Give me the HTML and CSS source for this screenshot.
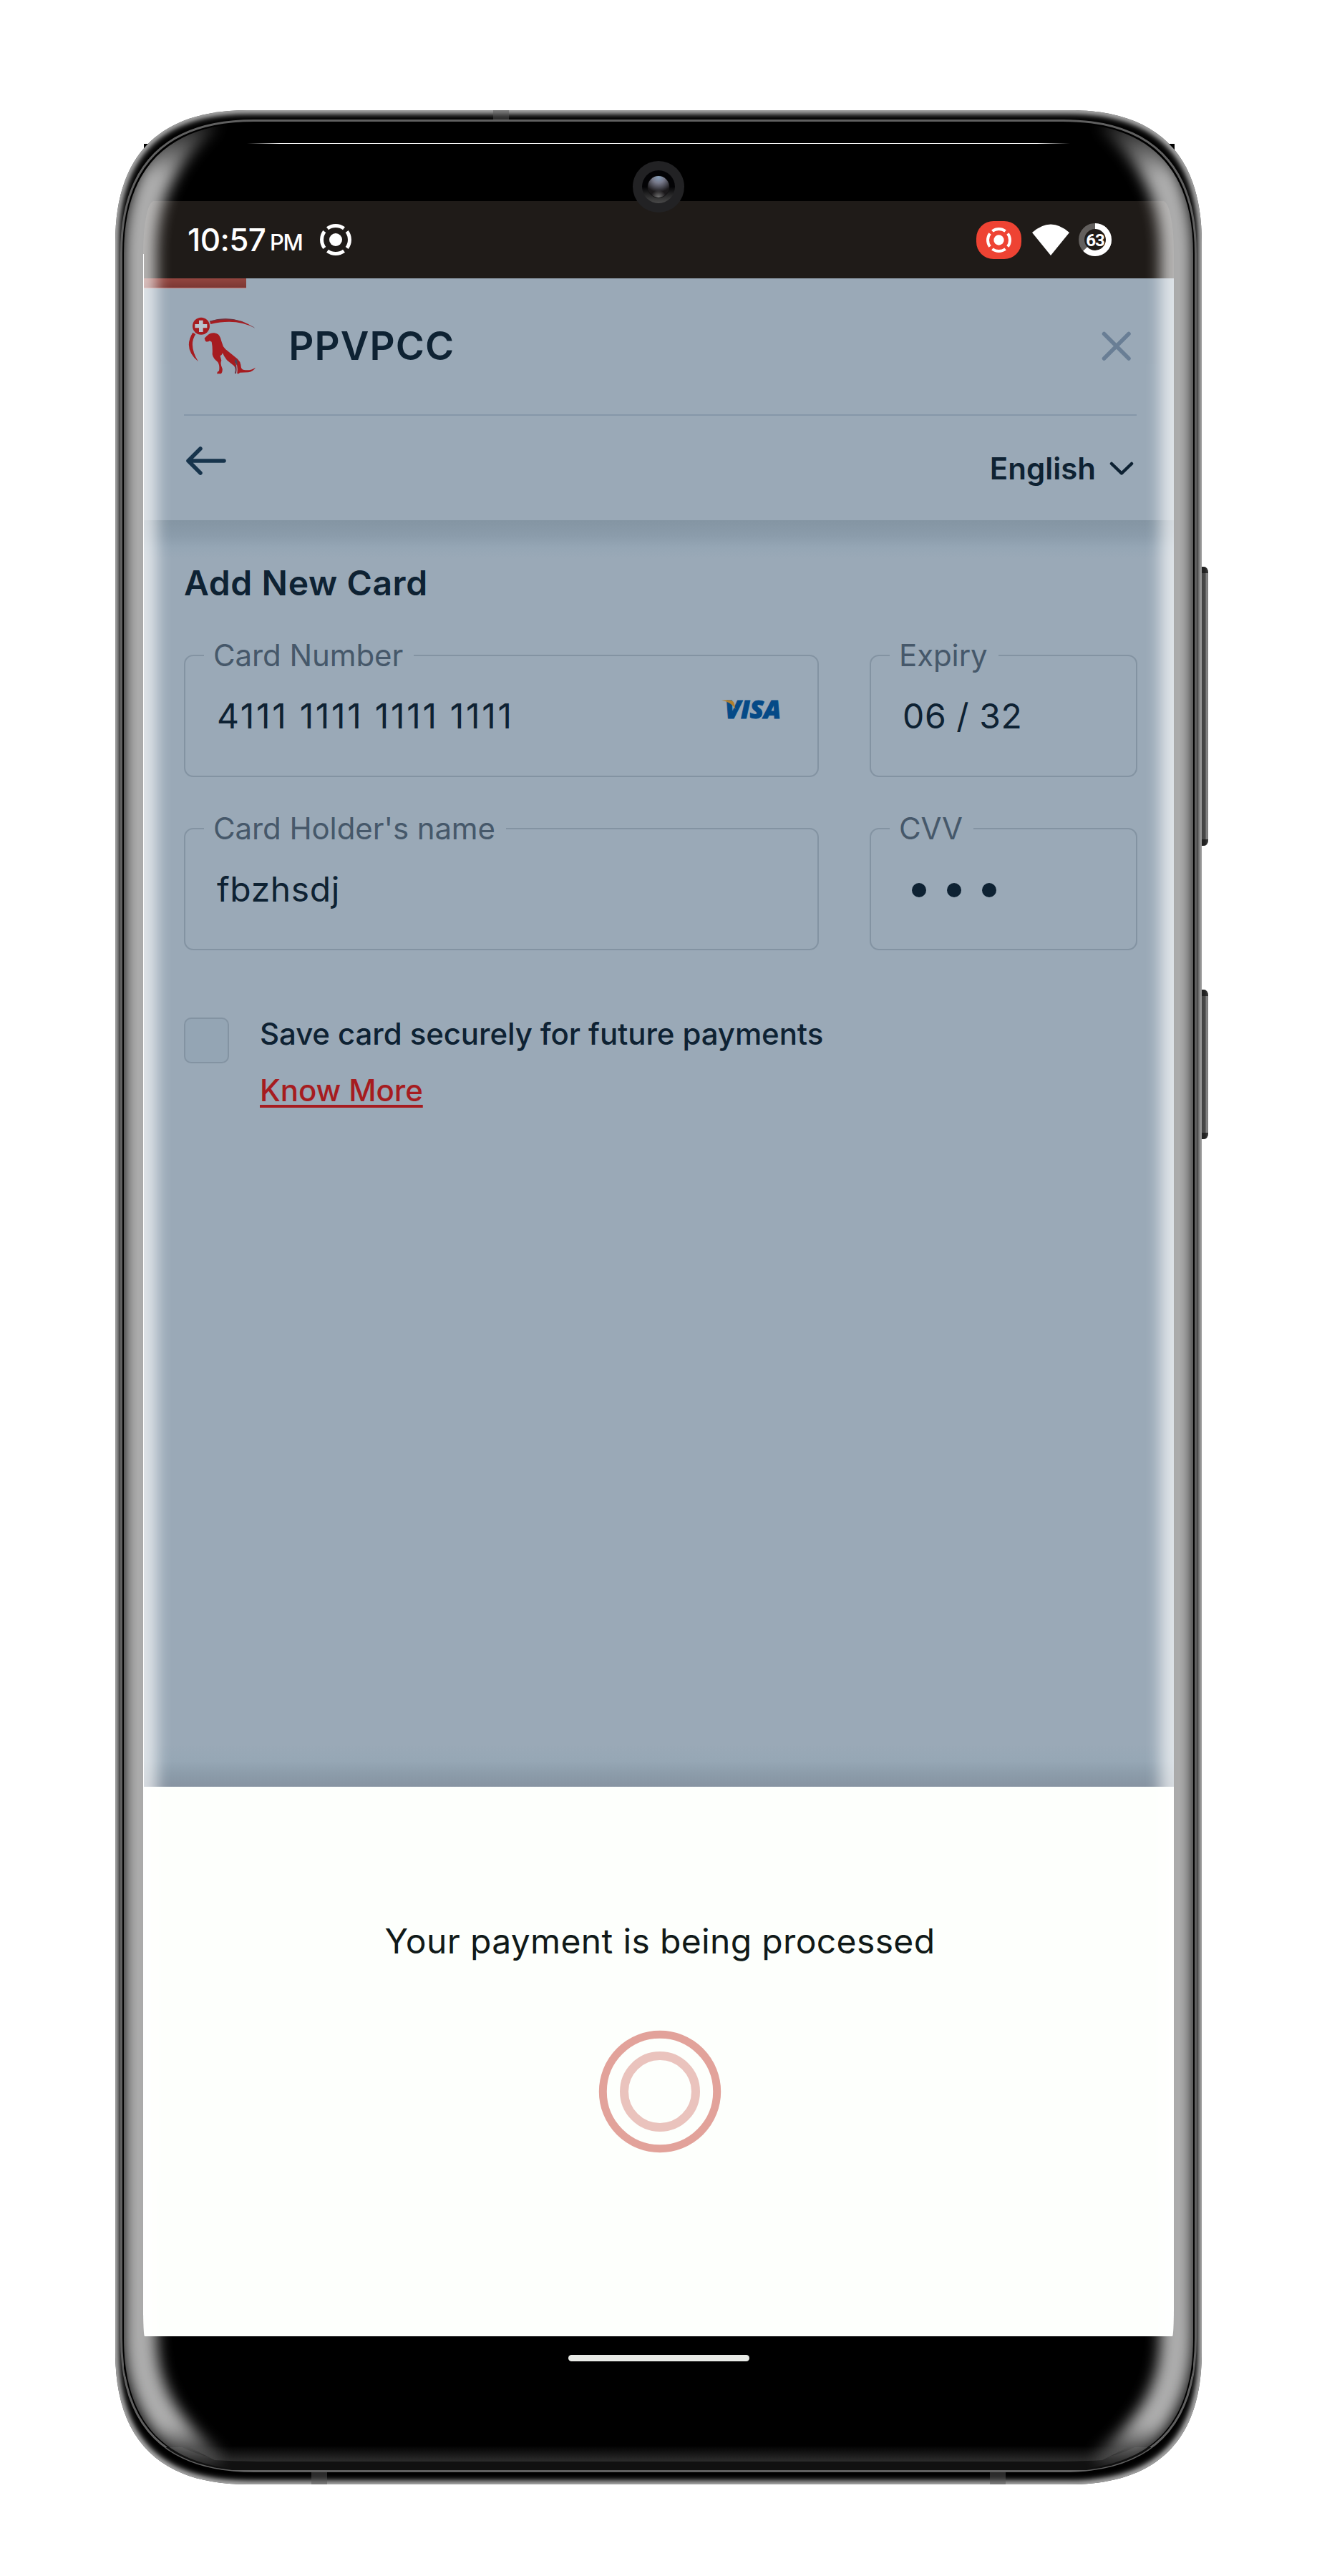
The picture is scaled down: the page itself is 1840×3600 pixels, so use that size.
FILE: index.html
```html
<!DOCTYPE html>
<html lang="en">
<head>
<meta charset="utf-8">
<title>PPVPCC – Add New Card</title>
<link rel="stylesheet" href="styles.css">
</head>
<body>
<div class="stage">
  <svg class="layer" viewBox="0 0 1840 3600" aria-hidden="true">
    <defs>
      <path id="body" d="M161 339C161 216 223 154 346 154H1494C1617 154 1679 216 1679 339V3287C1679 3410 1617 3472 1494 3472H346C223 3472 161 3410 161 3287Z"/>
      <path id="rim" d="M169.5 354C169.5 231 232 168.500 355 168.500H1485C1608 168.500 1670.500 231 1670.500 354V3268C1670.500 3391 1608 3453.500 1485 3453.500H355C232 3453.500 169.500 3391 169.500 3268Z"/>
      <clipPath id="bodyClip"><use href="#body"/></clipPath>
      <filter id="soft" filterUnits="userSpaceOnUse" x="100" y="100" width="1640" height="3440"><feGaussianBlur stdDeviation="4.500"/></filter>
      <linearGradient id="key" x1="0" x2="1"><stop offset="0" stop-color="#404040"/><stop offset=".6" stop-color="#484848"/><stop offset=".85" stop-color="#999"/><stop offset="1" stop-color="#555"/></linearGradient>
      <linearGradient id="bottomGlow" x1="0" x2="0" y1="0" y2="1"><stop offset="0" stop-color="#000"/><stop offset="1" stop-color="#2d2d2d"/></linearGradient>
      <clipPath id="rimClip"><use href="#rim"/></clipPath>
    </defs>
    <rect x="201" y="201" width="1440" height="60"/>
    <path d="M1677 792h4q7 0 7 9v372q0 9-7 9h-4zM1677 1383h4q7 0 7 9v191q0 9-7 9h-4z" fill="url(#key)"/>
    <path d="M1677 792h4q7 0 7 9h-11zM1677 1383h4q7 0 7 9h-11zM1677 1182h4q7 0 7-9h-11zM1677 1592h4q7 0 7-9h-11z" fill="#151515" opacity=".75"/>
    <use href="#body"/>
    <g clip-path="url(#bodyClip)">
      <use href="#body" fill="none" stroke="#f0f0f0" stroke-width="8" filter="url(#soft)"/>
      <path d="M689 154h22v13h-22zM435 3455h22v17h-22zM1383 3455h22v17h-22z" fill="#555" opacity=".5"/>
    </g>
    <use href="#rim" fill="#000" stroke="#606060" stroke-width="3"/>
    <g clip-path="url(#rimClip)">
      <path d="M173 3420H1667V3452H173Z" fill="#111"/>
      <path d="M173 3250V3310C190 3390 250 3440 350 3440H1490C1590 3440 1650 3390 1667 3310V3250Z" fill="#000"/>
      <path d="M260 3418H1580L1540 3438Q1510 3440 1480 3440H360Q330 3440 300 3438Z" fill="url(#bottomGlow)"/>
    </g>
  </svg>

  <div class="screen">
    <div class="statusbar">
      <span class="time">10:57</span><span class="ampm">PM</span>
      <svg class="cast" viewBox="-22 -22 44 44" width="44" height="44" fill="none" stroke="#fff" stroke-width="5"><circle r="9" fill="#fff" stroke="none"/><path d="M-11.500-15.700A19.500 19.500 0 0 1 11.500-15.700M15.700-11.500A19.500 19.500 0 0 1 15.700 11.500M11.500 15.700A19.500 19.500 0 0 1-11.500 15.700M-15.700 11.500A19.500 19.500 0 0 1-15.700-11.500"/></svg>
      <span class="rec"><svg viewBox="-22 -22 44 44" width="35" height="35" fill="none" stroke="#fff" stroke-width="5"><circle r="9" fill="#fff" stroke="none"/><path d="M-11.500-15.700A19.500 19.500 0 0 1 11.500-15.700M15.700-11.500A19.500 19.500 0 0 1 15.700 11.500M11.500 15.700A19.500 19.500 0 0 1-11.500 15.700M-15.700 11.500A19.500 19.500 0 0 1-15.700-11.500"/></svg></span>
      <svg class="wifi" viewBox="0 0 52 44" width="52" height="44"><path d="M0 12Q26-11 52 12L26 44Z" fill="#fff"/></svg>
      <svg class="battery" viewBox="-23 -23 46 46" width="46" height="46" fill="none" stroke-width="8"><circle r="19" stroke="#625f5d"/><circle r="19" stroke="#fff" pathLength="100" stroke-dasharray="63 100" transform="rotate(-90)"/><text y="9" text-anchor="middle" fill="#fff">63</text></svg>
    </div>

    <div class="app">
      <header class="header">
        <div class="progress"></div>
        <div class="brand">
          <svg class="logo" viewBox="92 126 292 246" width="97.300" height="82" fill="#a61c20">
            <circle cx="152" cy="167" r="36"/>
            <path d="M143 143h17v16h17v16h-17v17h-17v-17h-17v-16h17z" fill="#b9c2cc"/>
            <path d="M188 146Q290 116 378 176Q300 133 192 159Z"/>
            <path d="M188 146Q290 116 378 176L372 170Q290 122 188 149Z" fill="#45475a" opacity=".6"/>
            <path d="M117 194L129 201Q98 247 140 316Q75 262 117 194Z"/>
            <path d="M166 218Q172 212 180 205Q190 195 207 196Q227 198 233 217Q238 235 245 253Q252 265 270 277L305 305Q318 317 319 336Q320 349 332 351Q360 355 380 341Q371 357 350 361L314 362Q309 370 303 365Q308 330 295 318Q304 335 299 366H293Q299 346 290 334L260 310Q248 295 242 280Q239 290 232 292L237 311Q231 325 241 346Q243 357 236 367H219Q217 360 227 355Q231 332 222 318Q202 303 199 285Q201 258 196 233L188 229Q178 236 170 230Z"/>
            <path d="M296 304Q306 312 303 332L308 350Q302 326 292 317ZM293 336Q299 350 294 365L298 366Q302 345 296 334Z" fill="#4a4559"/>
          </svg>
          <span class="title">PPVPCC</span>
          <svg class="close" viewBox="0 0 42 42" width="42" height="42"><path d="M3.500 3.500L38 38M38 3.500L3.500 38" stroke="#697e95" stroke-width="5.500" stroke-linecap="round"/></svg>
        </div>
        <div class="navrow">
          <svg class="back" viewBox="0 0 58 42" width="58" height="42" fill="none" stroke="#17344c" stroke-width="5.500" stroke-linecap="round" stroke-linejoin="round"><path d="M21 4L4 21L21 38M4 21H54"/></svg>
          <span class="lang">English</span>
          <svg class="chevron" viewBox="0 0 34 22" width="34" height="22" fill="none" stroke="#0e2233" stroke-width="4.500" stroke-linecap="round" stroke-linejoin="round"><path d="M3 4L17 17.500L31 4"/></svg>
        </div>
      </header>
      <main class="main">
        <h1 class="heading">Add New Card</h1>
        <div class="fields">
          <fieldset class="field"><legend class="label">Card Number</legend>
            <span class="value number">4111 1111 1111 1111</span>
            <svg class="visa" viewBox="0 0 86 48" width="86" height="48"><text x="4" y="36" textLength="78" lengthAdjust="spacingAndGlyphs">VISA</text><path d="M-1 10.500H11Q16 11 17 16L18.500 23Q12 13-1 10.500Z" fill="#b07f2d"/></svg>
          </fieldset>
          <fieldset class="field"><legend class="label">Expiry</legend><span class="value expiry">06 / 32</span></fieldset>
          <fieldset class="field"><legend class="label">Card Holder's name</legend><span class="value holder">fbzhsdj</span></fieldset>
          <fieldset class="field"><legend class="label">CVV</legend><span class="dots"><i></i><i></i><i></i></span></fieldset>
        </div>
        <div class="save">
          <span class="checkbox"></span>
          <div class="savetext"><div class="savelabel">Save card securely for future payments</div><a class="more">Know More</a></div>
        </div>
      </main>
    </div>

    <section class="sheet">
      <p class="message">Your payment is being processed</p>
      <svg class="spinner" viewBox="0 0 172 172" width="172" height="172" fill="none"><circle cx="86" cy="86" r="79.700" stroke="#e2a29a" stroke-width="11"/><circle cx="86" cy="86" r="50" stroke="#eac3bd" stroke-width="12"/></svg>
    </section>
  </div>
  <div class="pill"></div>

  <svg class="layer" viewBox="0 0 1840 3600" aria-hidden="true">
    <defs>
      <clipPath id="glass"><path d="M173 354C173 235 235 172 355 172H1485C1605 172 1667 235 1667 354V3268C1667 3389 1606 3451 1485 3451H355C234 3451 173 3389 173 3268Z"/></clipPath>
      <filter id="glow" filterUnits="userSpaceOnUse" x="80" y="80" width="1680" height="3460"><feGaussianBlur stdDeviation="10"/></filter>
      <linearGradient id="fade" gradientUnits="userSpaceOnUse" x1="0" x2="0" y1="160" y2="3450"><stop offset="0" stop-color="#fff" stop-opacity="0"/><stop offset=".026" stop-color="#fff"/><stop offset=".982" stop-color="#fff"/><stop offset="1" stop-color="#fff" stop-opacity="0"/></linearGradient>
      <linearGradient id="hair"><stop offset="0" stop-color="#fff" stop-opacity="0"/><stop offset=".04" stop-color="#fff"/><stop offset=".96" stop-color="#fff"/><stop offset="1" stop-color="#fff" stop-opacity="0"/></linearGradient>
      <linearGradient id="bezel" x1="0" x2="0" y1="0" y2="1"><stop offset=".5" stop-color="#030305"/><stop offset="1" stop-color="#4a4a4a"/></linearGradient>
      <radialGradient id="lensTop" cx=".5" cy=".05" r=".7"><stop offset="0" stop-color="#869eb8"/><stop offset=".4" stop-color="#77798a"/><stop offset="1" stop-color="#1b191b"/></radialGradient>
      <radialGradient id="lensLow" cx=".5" cy="1" r=".35"><stop offset="0" stop-color="#777"/><stop offset="1" stop-color="#777" stop-opacity="0"/></radialGradient>
    </defs>
    <g clip-path="url(#glass)">
      <g filter="url(#glow)" fill="none" stroke="url(#fade)" stroke-width="46" opacity=".68">
        <path d="M290 160C228 210 196 270 196 354V3268C196 3340 230 3400 300 3450"/>
        <path d="M1550 160C1612 210 1644 270 1644 354V3268C1644 3340 1610 3400 1540 3450"/>
      </g>
    </g>
    <rect x="345" y="200" width="1150" height="1" fill="url(#hair)"/>
    <rect x="200" y="355" width="1" height="2880" fill="#fff"/>
    <circle cx="920" cy="261" r="36" fill="#222224"/>
    <circle cx="920" cy="261" r="23" fill="url(#bezel)"/>
    <circle cx="920" cy="261" r="15.500" fill="#111"/>
    <circle cx="920" cy="261" r="15" fill="url(#lensTop)"/>
    <circle cx="920" cy="261" r="15" fill="url(#lensLow)"/>
  </svg>
</div>
</body>
</html>
```
FILE: styles.css
```css
* { box-sizing: border-box; }
body { margin: 0; background: #fff; font-family: Inter, "Liberation Sans", sans-serif; color: #0e2233; }
.stage { position: relative; width: 1840px; height: 3600px; padding-top: 281px; overflow: hidden; }
.layer { position: absolute; inset: 0; width: 1840px; height: 3600px; }

.screen { position: relative; width: 1440px; margin: 0 auto; overflow: hidden; border-radius: 15px 15px 2px 2px / 70px 70px 40px 40px; }

.statusbar { display: flex; align-items: center; height: 108px; padding: 0 87px 0 62px; background: #1f1b18; color: #fff; }
.time { width: 115px; font-size: 44px; font-weight: 500; letter-spacing: -0.6px; white-space: nowrap; }
.ampm { width: 70px; margin-top: 6px; font-size: 31px; font-weight: 500; letter-spacing: -1.5px; }
.rec { display: flex; align-items: center; justify-content: center; width: 63px; height: 53px; margin-left: auto; border-radius: 24px; background: #ee4333; }
.wifi { margin-left: 15px; }
.battery { margin-left: 13px; }
.battery text { font: 700 24px Roboto, sans-serif; letter-spacing: -1px; }

.app { height: 2108px; background: linear-gradient(to top, #8793a1 0, #8b9ba9 16px, #96a7b5 36px, #9aa9b7 60px); }
.header { position: relative; height: 338px; padding: 0 52px 0 57px; background: #9aa9b7; }
.header::after { content: ""; position: absolute; left: 0; right: 0; top: 100%; height: 54px; background: linear-gradient(#8495a3, #8b9cab 22px, #95a6b5 38px, #9aa9b7); }
.progress { position: absolute; left: 0; top: 0; width: 144px; height: 14px; background: linear-gradient(#93453f, #7b3733); border-bottom: 1px solid #c27a76; }
.brand { display: flex; align-items: center; height: 192px; padding: 0 7px 0 4px; border-bottom: 2px solid #8597a9; }
.logo { margin-top: -2px; }
.title { margin: -2px 0 0 45px; font-size: 54.5px; font-weight: 600; line-height: 60px; letter-spacing: 1.1px; }
.close { margin-left: auto; }
.navrow { display: flex; align-items: center; height: 146px; }
.back { margin: -21px 0 0 2px; }
.lang { margin-left: auto; font-size: 42px; font-weight: 600; }
.chevron { margin: 2px 4px 0 19px; }

.main { padding: 58px 52px 0 57px; }
.heading { margin: 0; font-size: 48px; font-weight: 600; line-height: 60px; letter-spacing: 0.6px; }
.fields { display: grid; grid-template-columns: 887px 374px; column-gap: 71px; row-gap: 46px; margin-top: 45px; }
.field { display: flex; min-width: 0; height: 196px; margin: 0; padding: 29px 47px 0 44px; border: 2px solid #8393a2; border-radius: 13px; }
.label { margin-left: -18px; padding: 0 15px 0 13px; font-size: 42px; line-height: 52px; letter-spacing: -0.1px; color: #46586a; }
.value { font-size: 48px; line-height: 60px; letter-spacing: 0.6px; }
.number { letter-spacing: 2.7px; }
.visa { margin: -3px 0 0 auto; overflow: visible; }
.visa text { font: italic 800 35px "Open Sans", sans-serif; fill: #054a87; stroke: #054a87; stroke-width: 1px; }
.dots { display: flex; gap: 29px; padding: 21px 0 0 13px; }
.dots i { width: 20px; height: 20px; border-radius: 50%; background: #0e2233; }

.save { display: flex; margin-top: 77px; gap: 43px; }
.checkbox { width: 63px; height: 64px; margin-top: 17px; border: 2px solid #8393a2; border-radius: 10px; background: #94a5b4; }
.savelabel, .more { font-size: 42px; font-weight: 500; line-height: 79px; letter-spacing: -0.1px; }
.more { color: #a61c20; text-decoration: underline; text-decoration-thickness: 4px; text-underline-offset: 5px; }

.sheet { display: flex; flex-direction: column; align-items: center; height: 768px; padding: 186px 0 0 4px; background: #fdfffc; }
.message { margin: 0; font-size: 48px; line-height: 60px; letter-spacing: 0.35px; color: #101918; }
.spinner { margin-top: 94px; }
.pill { position: relative; width: 253px; height: 9px; margin: 26px auto 0; border-radius: 5px; background: #e8eae6; }
```
